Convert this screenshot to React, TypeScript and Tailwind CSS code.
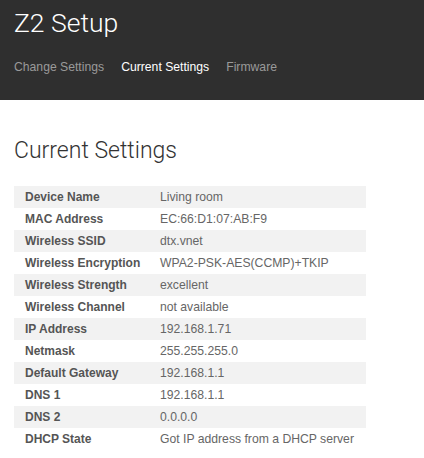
const rows: [string, string][] = [
  ["Device Name", "Living room"],
  ["MAC Address", "EC:66:D1:07:AB:F9"],
  ["Wireless SSID", "dtx.vnet"],
  ["Wireless Encryption", "WPA2-PSK-AES(CCMP)+TKIP"],
  ["Wireless Strength", "excellent"],
  ["Wireless Channel", "not available"],
  ["IP Address", "192.168.1.71"],
  ["Netmask", "255.255.255.0"],
  ["Default Gateway", "192.168.1.1"],
  ["DNS 1", "192.168.1.1"],
  ["DNS 2", "0.0.0.0"],
  ["DHCP State", "Got IP address from a DHCP server"],
];

export default function App() {
  return (
    <div className="min-h-[458px] bg-white font-['Liberation_Sans',Arial,sans-serif]">
      <header className="h-[100px] bg-[#2f2f2f] px-[14px] pt-[8px]">
        <h1 className="font-['Roboto',sans-serif] text-[26.5px] leading-[30px] font-light text-white">
          Z2 Setup
        </h1>
        <nav className="mt-[21px] flex gap-[17px] text-[12.2px] leading-[16px]">
          <a className="text-[#9a9a9a]">Change Settings</a>
          <a className="text-white">Current Settings</a>
          <a className="text-[#9a9a9a]">Firmware</a>
        </nav>
      </header>

      <main className="px-[14px] pt-[37px]">
        <h2 className="font-['Roboto',sans-serif] text-[23px] leading-[27px] font-light text-[#333333]">
          Current Settings
        </h2>
        <table className="mt-[22px] w-[352px] border-collapse text-[12px]">
          <tbody>
            {rows.map(([label, value], i) => (
              <tr
                key={label}
                className={i % 2 === 0 ? "h-[22px] bg-[#f2f2f2]" : "h-[22px] bg-white"}
              >
                <td className="w-[136px] pl-[11px] font-bold text-[#555555]">
                  {label}
                </td>
                <td className="pl-[10px] text-[12.2px] text-[#666666]">{value}</td>
              </tr>
            ))}
          </tbody>
        </table>
      </main>
    </div>
  );
}
